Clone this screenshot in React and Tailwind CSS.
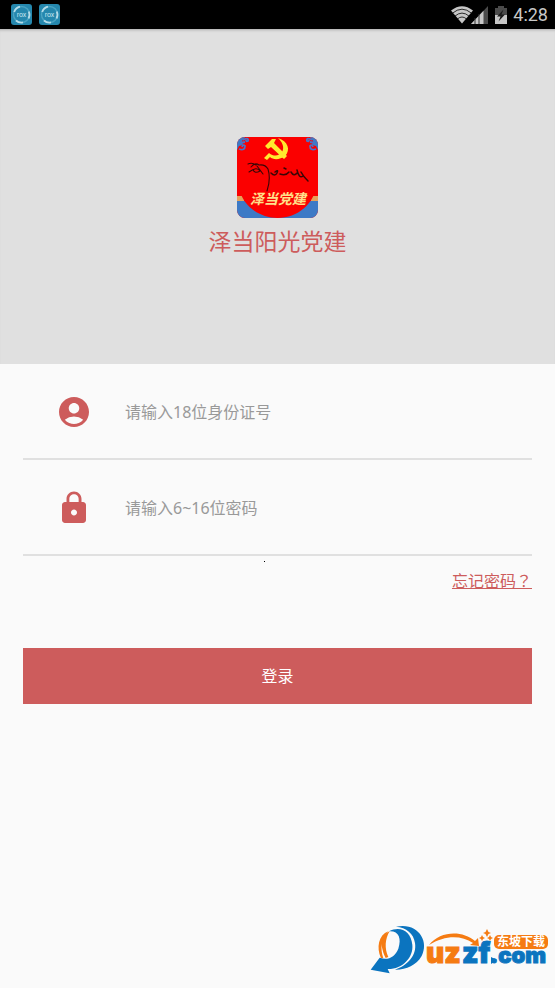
import React, { useState } from 'react';
import { MdAccountCircle, MdLock } from 'react-icons/md';

const RoxIcon = () => (
  <svg viewBox="0 0 21 21" className="h-[21px] w-[21px]" aria-hidden="true">
    <rect width="21" height="21" rx="3" fill="#2587ad" />
    <circle cx="10.5" cy="10.5" r="8" fill="none" stroke="#4ba4c3" strokeWidth="1.4" />
    <path d="M3.2 8A8 8 0 0 1 9 2.7M17.8 7.5A8 8 0 0 1 17.5 14.5M12 18.4A8 8 0 0 1 5 16.5" fill="none" stroke="#b5dce9" strokeWidth="1.8" />
    <text x="10.5" y="12.5" textAnchor="middle" fontSize="7" fontFamily="Roboto, sans-serif" fill="#c4e4ee">rox</text>
  </svg>
);

const StatusBar = () => (
  <header className="flex h-[29px] items-center justify-between bg-black pr-[7px] pl-[11px]">
    <div className="flex gap-[7px]">
      <RoxIcon />
      <RoxIcon />
    </div>
    <div className="flex items-center">
      {/* wifi */}
      <svg viewBox="0 0 22 18" className="h-[18px] w-[22px]" aria-hidden="true">
        <path d="M0 4.5Q11-4 22 4.5L11 17.5Z" fill="#c6c6c6" />
        <path d="M1.5 7.2Q11-.8 20.5 7.2M3.8 10.2Q11 4 18.2 10.2M6.4 13Q11 9 15.6 13" fill="none" stroke="#000" strokeWidth=".8" />
      </svg>
      {/* mobile signal */}
      <svg viewBox="0 0 18 18" className="-ml-[2px] h-[18px] w-[18px]" aria-hidden="true">
        <path d="M0 18L17 0V18Z" fill="#4b4b4b" />
        <path d="M0 18L12.5 4.8V18Z" fill="#c6c6c6" />
        <path d="M4 12V18M8 8V18" stroke="#333" strokeWidth="1" />
      </svg>
      {/* battery */}
      <svg viewBox="0 0 12 18" className="ml-[6px] h-[18px] w-[12px]" aria-hidden="true">
        <path d="M3 0H9V2H12V18H0V2H3Z" fill="#4b4b4b" />
        <path d="M0 9H12V18H0Z" fill="#c6c6c6" />
        <path d="M8.5 3.5L2 10.5H5.5L3.5 15.5L10 8.5H6.5Z" fill="#1b1b1b" />
      </svg>
      <span className="ml-[6px] font-[Roboto,sans-serif] text-[18px] leading-[29px] text-[#c8c8c8]">4:28</span>
    </div>
  </header>
);

const AppLogo = () => (
  <svg viewBox="0 0 81 81" className="h-[81px] w-[81px]" role="img" aria-label="泽当阳光党建">
    <defs>
      <clipPath id="logo-shape">
        <rect width="81" height="81" rx="8" />
      </clipPath>
    </defs>
    <g clipPath="url(#logo-shape)">
      <rect width="81" height="81" fill="#fb0000" />
      <path d="M0 64H81V81H0Z" fill="#3d7ac6" />
      <path d="M0 59H7V64H0ZM74 59H81V64H74Z" fill="#e5a35b" />
      <path d="M2 50C4 66 20 81 40.5 81S77 66 79 50Z" fill="#fb0000" />
      {/* corner clouds */}
      <path d="M0 0H8L5 4L6 8L2 9L0 13ZM81 0H73L76 4L75 8L79 9L81 13Z" fill="#3d7ac6" />
      <path d="M2 12Q8 14 8 9Q6 7 5 10M6 3Q12 0 11 4Q9 5 9 3M3 6L8 5M79 12Q73 14 73 9Q75 7 76 10M75 3Q69 0 70 4Q72 5 72 3M78 6L73 5" fill="none" stroke="#4a72c8" strokeWidth="1.8" />
      {/* hammer and sickle */}
      <path d="M41 1C51 4 54 13 48 19C43 23 36 23 33 20L30 23L27 21L32 16C37 20 42 19 45 15C48 10 45 5 41 1Z" fill="#ffe92e" />
      <path d="M28 9L35 2L39 2L37 6L50 19L47 22L34 10L31 12Z" fill="#ffe92e" />
      {/* calligraphy */}
      <path d="M11 27Q15 25 19 28M14 30Q18 25 22 28Q28 27 31 32Q34 42 30 54M12 35Q20 29 23 34Q18 37 16 33M20 29L26 37" fill="none" stroke="#390606" strokeWidth="1.1" strokeLinecap="round" />
      <path d="M34 36Q38 40 40 36Q42 32 38 35M43 37Q49 39 52 35M47 31L49 32M54 35Q57 40 60 36M60 33Q62 42 66 39M64 35Q66 39 71 44" fill="none" stroke="#390606" strokeWidth="1.5" strokeLinecap="round" />
      <text x="41" y="67" textAnchor="middle" fontSize="14" fontWeight="700" fontStyle="italic" fontFamily="'Noto Sans CJK SC', sans-serif" fill="#ffe08a">泽当党建</text>
    </g>
  </svg>
);

const SiteMark = () => (
  <svg viewBox="0 0 195 73" className="h-[73px] w-[195px]" role="img" aria-label="uzzf.com 东坡下载">
    {/* swoosh */}
    <g transform="translate(5 3) scale(.3333)">
      <path d="M74 40C58 46 44 66 50 84C53 98 56 110 62 120L70 117C58 92 60 62 74 40Z" fill="#f57b12" />
      <path d="M70 40C40 52 34 88 48 121L55 121C45 92 48 62 70 40Z" fill="#f57b12" />
      <path d="M72 40C102 38 110 62 100 92C90 118 68 128 44 119L17 155L74 166L68 153C112 154 146 118 142 80C138 38 104 22 72 40Z" fill="#0b74bf" />
      <path d="M93 26C158 12 194 68 170 114C154 142 122 156 90 155C128 142 156 112 150 75C146 46 124 29 93 26Z" fill="#0b74bf" />
    </g>
    {/* wordmark */}
    <g fontFamily="Inter, sans-serif" fontWeight="900" strokeWidth="1">
      <text x="66" y="48" fontSize="28" fill="#f57b12" stroke="#f57b12">uz</text>
      <text x="102" y="48" fontSize="28" fill="#0b74bf" stroke="#0b74bf">zf</text>
      <text x="130" y="48" fontSize="22" fill="#0b74bf" stroke="#0b74bf">.com</text>
    </g>
    <path d="M131 42L137 45L131 49Z" fill="#0b74bf" />
    <path d="M69 30C80 16 102 15 115 26L118 23L119 31L110 30L113 28C101 20 85 20 69 30Z" fill="#f57b12" />
    <path d="M127 14L128.5 17L131 18L128.5 19L127 22L125.5 19L123 18L125.5 17ZM122 20L123 22L125 23L123 24L122 26L121 24L119 23L121 22ZM130 20L131 22L133 23L131 24L130 26L129 24L127 23L129 22Z" fill="#f57b12" />
    <rect x="134" y="20" width="54" height="14" rx="5" fill="#f57b12" />
    <text x="137" y="31" fontSize="12" fontWeight="700" fontFamily="'Noto Sans CJK SC', sans-serif" fill="#fff">东坡下载</text>
  </svg>
);

const Field = ({ id, label, hint, icon: Icon, ...inputProps }) => (
  <div className="flex items-center border-b-2 border-[#e0e0e0] pt-[30px] pb-[28px]">
    <label htmlFor={id} aria-label={label} className="ml-[33px] flex w-[69px] shrink-0 items-center">
      <Icon className="h-[36px] w-[36px] text-[#cd5c5c]" aria-hidden="true" />
    </label>
    <input
      id={id}
      placeholder={hint}
      className="h-[34px] min-w-0 flex-1 bg-transparent text-[16px] text-[#333] outline-none placeholder:text-[#999]"
      {...inputProps}
    />
  </div>
);

const App = () => {
  const [idNumber, setIdNumber] = useState('');
  const [password, setPassword] = useState('');

  const handleSubmit = (e) => {
    e.preventDefault();
  };

  return (
    <div className="flex min-h-screen flex-col bg-[#fafafa] font-['Noto_Sans','Noto_Sans_CJK_SC',sans-serif]">
      <StatusBar />

      <section className="flex flex-col items-center bg-[#e0e0e0] pt-[108px] pb-[106px] shadow-[inset_0_3px_3px_-2px_#aaa]">
        <AppLogo />
        <h1 className="mt-[6px] text-[23px] leading-[34px] text-[#cd5c5c]">泽当阳光党建</h1>
      </section>

      <form onSubmit={handleSubmit} className="px-[23px]">
        <Field
          id="id-number"
          label="身份证号"
          hint="请输入18位身份证号"
          icon={MdAccountCircle}
          type="text"
          value={idNumber}
          onChange={(e) => setIdNumber(e.target.value)}
        />
        <Field
          id="password"
          label="密码"
          hint="请输入6~16位密码"
          icon={MdLock}
          type="password"
          value={password}
          onChange={(e) => setPassword(e.target.value)}
        />
        <div className="relative flex justify-end pt-[12px]">
          <span className="absolute top-[5px] left-[241px] h-px w-px bg-black" />
          <a href="#forgot" className="text-[16px] leading-[24px] text-[#cd5c5c] underline">
            忘记密码<span className="font-['Noto_Sans_CJK_TC',sans-serif]">？</span>
          </a>
        </div>
        <button type="submit" className="mt-[55px] h-[56px] w-full bg-[#cd5c5c] text-[16px] text-white">
          登录
        </button>
      </form>

      <footer className="mt-auto flex justify-end">
        <SiteMark />
      </footer>
    </div>
  );
};

export default App;
